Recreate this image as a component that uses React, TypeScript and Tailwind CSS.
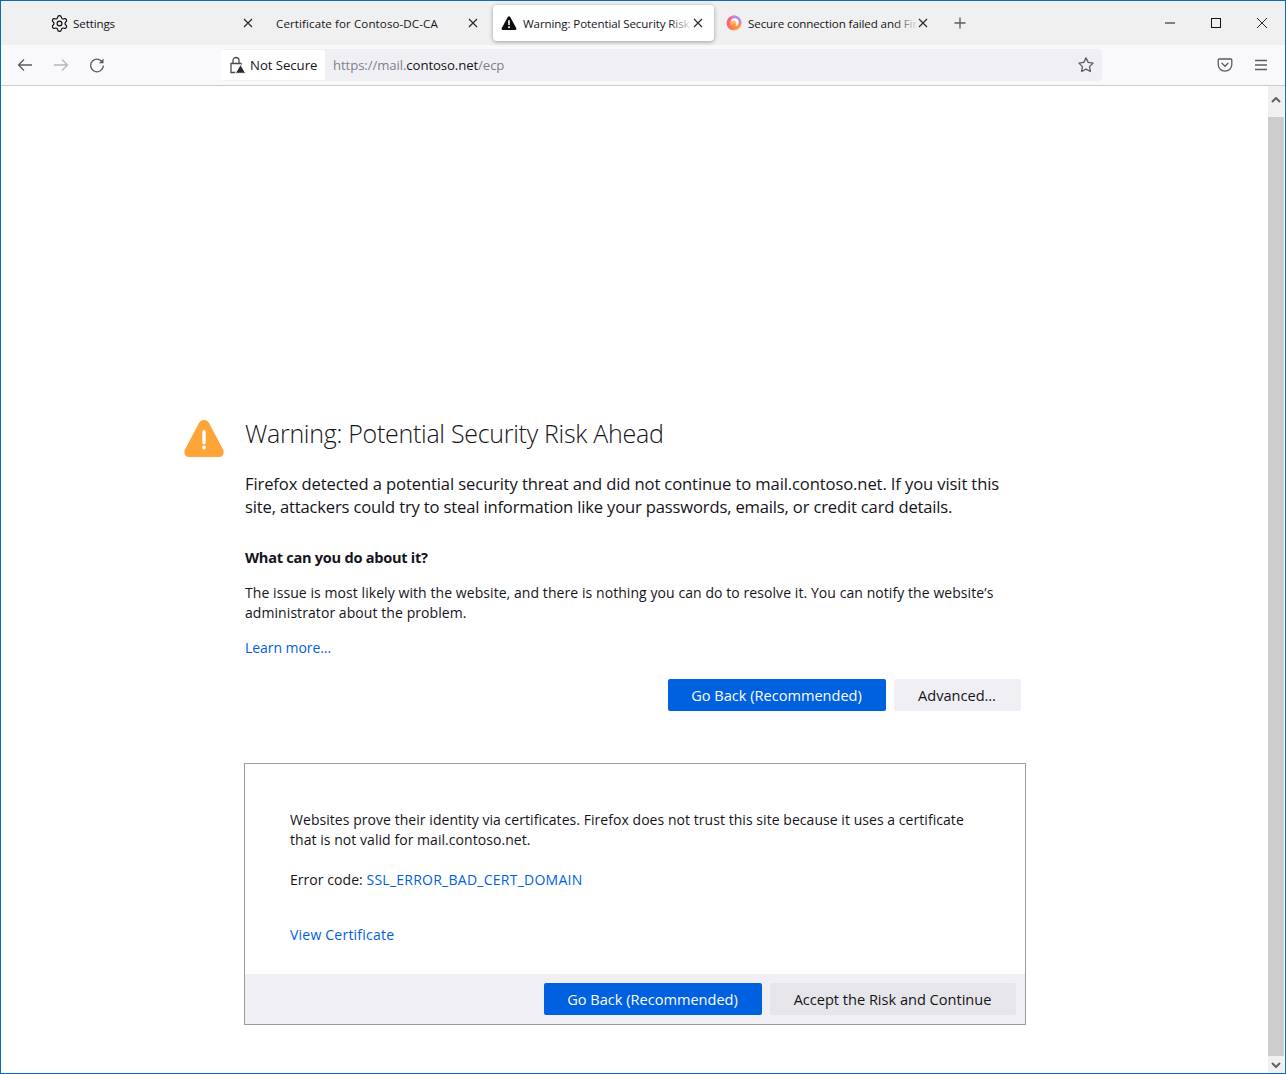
import React from "react";
import { Settings } from "lucide-react";

const F = "font-['Open_Sans','Noto_Sans',sans-serif]";

function Close() {
  return (
    <svg width="10" height="10" viewBox="0 0 10 10" className="shrink-0" fill="none" stroke="#2b2a33" strokeWidth="1.2">
      <path d="M1 1l8 8M9 1l-8 8" />
    </svg>
  );
}

function Tab({ icon, title, width, active, fade, pl, gap, track = "tracking-[-0.12px]" }: { icon?: React.ReactNode; title: string; width: string; active?: boolean; fade?: boolean; pl: string; gap: string; track?: string }) {
  return (
    <div className={`${width} ${pl} ${active ? "bg-white rounded-[4px] shadow-[0_1px_4px_rgba(0,0,0,0.35)]" : ""} h-[36px] flex items-center shrink-0 pr-[11px]`}>
      {icon}
      <div className={`${gap} ${track} flex-1 min-w-0 overflow-hidden whitespace-nowrap text-[11.6px] leading-[18px] pt-[1px] text-[#15141a] relative`}>
        {title}
        {fade && <div className={`absolute right-0 top-0 bottom-0 w-[24px] bg-gradient-to-r from-transparent ${active ? "to-white" : "to-[#f0f0f0]"}`} />}
      </div>
      <Close />
    </div>
  );
}

function WarnSmall() {
  return (
    <svg width="16" height="16" viewBox="0 0 16 16" className="shrink-0">
      <path d="M8 1.200c.5 0 .9.300 1.200.800l6 11c.5 1-.1 2-1.200 2H2c-1.100 0-1.700-1-1.200-2l6-11c.3-.5.7-.8 1.200-.8z" fill="#0c0c0d" />
      <rect x="7.200" y="5" width="1.600" height="5.200" rx=".8" fill="#fff" />
      <circle cx="8" cy="12.200" r="1" fill="#fff" />
    </svg>
  );
}

function FoxLogo() {
  return (
    <svg width="16" height="16" viewBox="0 0 16 16" className="shrink-0">
      <defs>
        <linearGradient id="fx" x1="0.1" y1="0.2" x2="0.7" y2="1">
          <stop offset="0" stopColor="#ff5a9a" />
          <stop offset="0.6" stopColor="#ff6f5a" />
          <stop offset="1" stopColor="#ffb13d" />
        </linearGradient>
        <linearGradient id="fy" x1="0" y1="0" x2="0" y2="1">
          <stop offset="0" stopColor="#ffd27a" />
          <stop offset="1" stopColor="#ff8a3a" />
        </linearGradient>
      </defs>
      <circle cx="8" cy="8" r="7.500" fill="url(#fx)" />
      <path d="M5.500 1A7.500 7.500 0 0 1 15.500 8H13.200A5.400 5.400 0 0 0 5.500 3.200z" fill="#b28cff" />
      <circle cx="8.600" cy="7.200" r="4" fill="#fff" />
      <circle cx="7.200" cy="8.400" r="3.100" fill="url(#fy)" />
    </svg>
  );
}

function Pocket() {
  return (
    <svg width="16" height="16" viewBox="0 0 16 16" fill="none" stroke="#5b5b66" strokeWidth="1.300">
      <path d="M2.200 2h11.600c.6 0 1 .4 1 1v4.600c0 3.700-3 6.600-6.800 6.600S1.200 11.300 1.200 7.600V3c0-.6.4-1 1-1z" />
      <path d="M5 6.300l3 2.900 3-2.900" strokeLinecap="round" strokeLinejoin="round" />
    </svg>
  );
}

function Btn({ primary, w, children, alt }: { primary?: boolean; w: string; children: React.ReactNode; alt?: boolean }) {
  return (
    <div className={`${w} pt-[1px] pr-[1px] h-[32px] rounded-[2px] flex items-center justify-center text-[14.6px] tracking-[-0.02px] ${primary ? "bg-[#0061e0] text-[#fbfbfe]" : alt ? "bg-[#e6e6ea] text-[#15141a]" : "bg-[#f0f0f4] text-[#15141a]"}`}>
      {children}
    </div>
  );
}

export default function App() {
  return (
    <div className={`${F} w-[1286px] h-[1074px] overflow-hidden border border-[#0a6cb8] bg-white flex flex-col text-[#15141a]`}>
      {/* Tab strip */}
      <div className="h-[44px] bg-[#f0f0f0] flex items-center shrink-0 relative">
        <Tab width="w-[263px]" pl="pl-[49px]" gap="ml-[4px]" icon={<Settings size={19} strokeWidth={1.5} color="#0c0c0d" className="shrink-0" />} title="Settings" />
        <Tab width="w-[225px]" pl="pl-[12px]" gap="" title="Certificate for Contoso-DC-CA" track="tracking-[0.08px]" />
        <div className="w-[4px] shrink-0" />
        <Tab width="w-[221px]" pl="pl-[8px]" gap="ml-[6px]" icon={<WarnSmall />} title="Warning: Potential Security Risk Ahead" active fade />
        <div className="w-[4px] shrink-0" />
        <Tab width="w-[221px]" pl="pl-[8px]" gap="ml-[6px]" icon={<FoxLogo />} title="Secure connection failed and Firefox" fade />
        <svg width="12" height="12" viewBox="0 0 12 12" className="ml-[15px] shrink-0" stroke="#5b5b66" strokeWidth="1.300" fill="none">
          <path d="M6 .5v11M.5 6h11" />
        </svg>
        <div className="ml-auto flex items-center shrink-0">
          <div className="w-[46px] flex justify-center">
            <svg width="10" height="10" viewBox="0 0 10 10" stroke="#111" fill="none"><path d="M0 5h10" /></svg>
          </div>
          <div className="w-[46px] flex justify-center">
            <svg width="10" height="10" viewBox="0 0 10 10" stroke="#111" fill="none"><rect x=".5" y=".5" width="9" height="9" /></svg>
          </div>
          <div className="w-[46px] flex justify-center">
            <svg width="10" height="10" viewBox="0 0 10 10" stroke="#111" strokeWidth=".9" fill="none"><path d="M0 0l10 10M10 0L0 10" /></svg>
          </div>
        </div>
      </div>

      {/* Nav bar */}
      <div className="h-[41px] bg-[#f9f9fb] border-b border-[#cccccc] flex items-center shrink-0">
        <div className="flex items-center pl-[16px] w-[220px] shrink-0">
          <svg width="16" height="16" viewBox="0 0 16 16" fill="none" stroke="#5b5b66" strokeWidth="1.300"><path d="M15 8H1.500M7 2.500L1.500 8 7 13.500" /></svg>
          <svg width="16" height="16" viewBox="0 0 16 16" fill="none" stroke="#b6b6bc" strokeWidth="1.300" className="ml-[20px]"><path d="M1 8h13.500M9 2.500L14.500 8 9 13.500" /></svg>
          <svg width="16" height="16" viewBox="0 0 16 16" fill="none" stroke="#5b5b66" strokeWidth="1.300" className="ml-[20px]"><path d="M13.800 6A6.300 6.300 0 1 0 14.300 8.600" /><path d="M14.500 1.500V6.200H9.800" fill="#5b5b66" stroke="none" /></svg>
        </div>
        <div className="w-[881px] h-[32px] bg-[#f0f0f4] rounded-[4px] flex items-center shrink-0 relative">
          <div className="h-[30px] w-[104px] bg-white rounded-[2px] flex items-center pl-[7px] shrink-0">
            <svg width="18" height="18" viewBox="0 0 18 18" fill="none" className="shrink-0">
              <path d="M3 7.500h10v9H3z" stroke="#4a4a55" strokeWidth="1.300" fill="#fff" />
              <path d="M5 7.500V4.500a3 3 0 0 1 6 0v3" stroke="#4a4a55" strokeWidth="1.300" />
              <path d="M12.500 8.500l5.200 8.800H7.300z" fill="#2b2a33" stroke="#fff" strokeWidth="1" />
            </svg>
            <span className="ml-[4px] pt-[2px] text-[13.2px] tracking-[-0.05px] whitespace-nowrap">Not Secure</span>
          </div>
          <div className="ml-[8px] pt-[2px] text-[13.2px] tracking-[-0.1px] text-[#80808a] whitespace-nowrap">
            https://mail.<span className="text-[#15141a]">contoso.net</span>/ecp
          </div>
          <svg width="16" height="16" viewBox="0 0 16 16" fill="none" stroke="#5b5b66" strokeWidth="1.300" strokeLinejoin="round" className="ml-auto mr-[8px]">
            <path d="M8 .9l2.200 4.500 4.900.7-3.550 3.500.85 4.900L8 12.200l-4.400 2.300.85-4.900L.9 6.100l4.900-.7z" />
          </svg>
        </div>
        <div className="ml-auto flex items-center pr-[17px]">
          <Pocket />
          <svg width="14" height="12" viewBox="0 0 14 12" stroke="#5b5b66" strokeWidth="1.300" className="ml-[21px]"><path d="M1 1.500h12M1 6h12M1 10.500h12" /></svg>
        </div>
      </div>

      {/* Content */}
      <div className="flex-1 flex min-h-0">
        <div className="flex-1 min-w-0 pt-[333px] pl-[183px]">
          <div className="flex">
            <svg width="40" height="37" viewBox="0 0 40 37" className="shrink-0 mt-[1px]">
              <path d="M20 0c2.300 0 4 1.200 5.300 3.400L38.900 29.200C40.900 33 38.800 37 34.600 37H5.400C1.200 37-.9 33 1.100 29.200L14.700 3.400C16 1.200 17.700 0 20 0z" fill="#ffa436" />
              <rect x="18.300" y="10" width="3.400" height="14.500" rx="1.700" fill="#fff" />
              <circle cx="20" cy="27.500" r="1.900" fill="#fff" />
            </svg>
            <div className="w-[782px] ml-[20px]">
              <div className="pl-[1px]">
                <h1 className="text-[25px] leading-[32px] font-light tracking-[-0.29px] -mt-[2px] text-[#15141a]">Warning: Potential Security Risk Ahead</h1>
                <p className="mt-[23px] text-[16.6px] leading-[23px] w-[770px]">
                  <span className="block tracking-[-0.12px] whitespace-nowrap">Firefox detected a potential security threat and did not continue to mail.contoso.net. If you visit this</span>
                  <span className="block tracking-[-0.17px] whitespace-nowrap">site, attackers could try to steal information like your passwords, emails, or credit card details.</span>
                </p>
                <p className="mt-[29px] text-[14.6px] leading-[20px] font-bold tracking-[-0.28px]">What can you do about it?</p>
                <p className="mt-[16px] text-[14px] leading-[20px] tracking-[0.07px] w-[770px]">
                  The issue is most likely with the website, and there is nothing you can do to resolve it. You can notify the website’s administrator about the problem.
                </p>
                <p className="mt-[15px] text-[14px] leading-[20px] tracking-[-0.06px] text-[#0060df]">Learn more…</p>
              </div>
              <div className="mt-[21px] flex justify-end gap-[8px] pr-[5px]">
                <Btn primary w="w-[218px]">Go Back (Recommended)</Btn>
                <Btn w="w-[127px]">Advanced…</Btn>
              </div>
              <div className="mt-[52px] border border-[#9b9b9b] h-[262px] flex flex-col">
                <div className="flex-1 pl-[45px] pt-[46px] pr-[45px]">
                  <p className="text-[14px] leading-[20px] tracking-[0.05px]">
                    Websites prove their identity via certificates. Firefox does not trust this site because it uses a certificate that is not valid for mail.contoso.net.
                  </p>
                  <p className="mt-[20px] text-[14px] leading-[20px] tracking-[0.05px]">
                    Error code: <span className="text-[#0060df] tracking-[0.25px]">SSL_ERROR_BAD_CERT_DOMAIN</span>
                  </p>
                  <p className="mt-[35px] text-[14px] leading-[20px] tracking-[0.22px] text-[#0060df]">View Certificate</p>
                </div>
                <div className="h-[50px] bg-[#f0f0f4] flex items-center justify-end gap-[8px] pr-[9px]">
                  <Btn primary w="w-[218px]">Go Back (Recommended)</Btn>
                  <Btn alt w="w-[246px]">Accept the Risk and Continue</Btn>
                </div>
              </div>
            </div>
          </div>
        </div>
        <div className="w-[16px] shrink-0 bg-[#f0f0f0] flex flex-col items-center mr-[1px]">
          <div className="h-[31px] shrink-0 flex items-center justify-center pb-[3px]">
            <svg width="10" height="6" viewBox="0 0 10 6" fill="none" stroke="#606060" strokeWidth="2"><path d="M1 5l4-4 4 4" /></svg>
          </div>
          <div className="flex-1 w-full bg-[#cdcdcd]" />
          <div className="h-[17px] shrink-0 flex items-center justify-center">
            <svg width="10" height="6" viewBox="0 0 10 6" fill="none" stroke="#606060" strokeWidth="2"><path d="M1 1l4 4 4-4" /></svg>
          </div>
        </div>
      </div>
    </div>
  );
}
